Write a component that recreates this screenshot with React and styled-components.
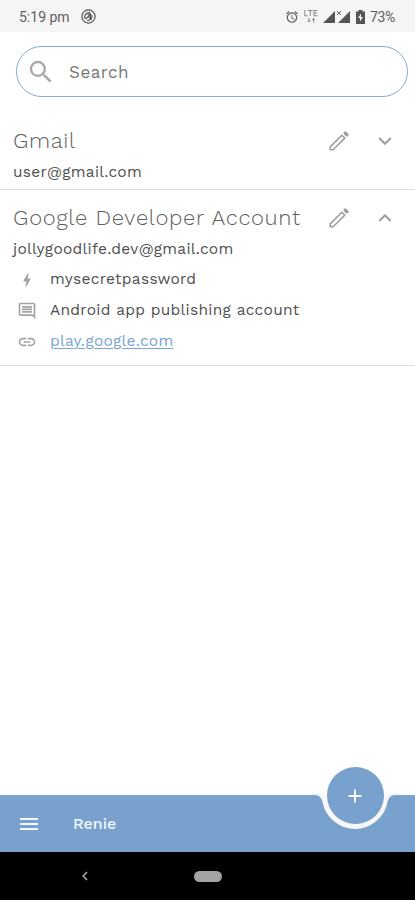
import React from 'react';
import styled, { createGlobalStyle } from 'styled-components';
import { MdSearch, MdInsertLink, MdBolt, MdOutlineComment, MdMenu, MdAdd, MdExpandMore, MdExpandLess, MdAlarm, MdChevronLeft } from 'react-icons/md';

const Global = createGlobalStyle`
  * { box-sizing: border-box; }
  body { margin: 0; background: #fff; font-family: "Work Sans", Inter, sans-serif; }
`;
const Screen = styled.div`
  width: 415px; height: 900px; display: flex; flex-direction: column;
  background: #fff; overflow: hidden;
`;
const StatusBar = styled.header`
  height: 32px; flex: none; display: flex; align-items: center; justify-content: space-between;
  padding: 1px 20px 0 19px; background: #f5f5f5; color: #606060;
  font: 400 14px/18px Roboto, sans-serif;
`;
const StatusGroup = styled.div`
  display: flex; align-items: center; gap: ${p => p.$gap}px;
  svg { display: block; flex: none; }
`;
const Label = styled.span`
  white-space: nowrap; letter-spacing: ${p => p.$track || 0}px;
`;
const SearchBox = styled.div`
  margin: 14px 7px 0 16px; height: 51px; flex: none; display: flex; align-items: center;
  gap: 13px; padding-left: 9px; border: 1px solid #84a9d3; border-radius: 26px;
  color: #777; font-size: 17px;
  svg { color: #aaa; }
`;
const Account = styled.section`
  flex: none; height: ${p => p.$height}px; padding: ${p => p.$top}px 17px 0 13px;
  border-bottom: 1px solid #dedede;
`;
const Heading = styled.div`
  display: flex; align-items: center; height: 32px;
`;
const Title = styled.h2`
  margin: 0; flex: 1; font-size: 22px; line-height: 32px; font-weight: 300; color: #606060;
`;
const Actions = styled.div`
  display: flex; align-items: center; gap: 22px; color: #a0a0a0;
  svg { display: block; }
`;
const Username = styled.div`
  height: 29px; font-size: 15.5px; line-height: 30px; color: #505050;
`;
const Detail = styled.div`
  height: 31px; display: grid; grid-template-columns: 28px 1fr; column-gap: 9px; align-items: center;
  font-size: 15.5px; line-height: 30px; color: #505050;
  svg { color: #a3a3a3; justify-self: center; margin-top: 2px; }
`;
const Link = styled.a`
  color: #7aa5d3; text-decoration: underline; text-underline-offset: 2px; text-decoration-thickness: 1px;
`;
const BottomBar = styled.footer`
  position: relative; margin-top: auto; height: 57px; flex: none; display: flex; align-items: center;
  padding-left: 17px; gap: 32px; background: #78a2cd; color: #f0f6fd; font-size: 16px; font-weight: 500;
`;
const Notch = styled.svg`
  position: absolute; left: 311px; top: -2px;
`;
const AddButton = styled.button`
  position: absolute; left: 327px; top: -28px; width: 57px; height: 57px; padding: 0 1px 0 0; border: 0;
  border-radius: 50%; display: grid; place-items: center; background: #78a2cd; color: #fff;
`;
const NavBar = styled.nav`
  height: 48px; flex: none; display: grid; grid-template-columns: 76px 118px 28px; align-items: center;
  background: #000; color: #aaa;
  svg { grid-column: 2; }
`;
const HomePill = styled.span`
  width: 28px; height: 11px; border-radius: 6px; background: #a3a3a3;
`;

const AppBadge = () => (
  <svg width="15" height="15" viewBox="0 0 15 15" fill="none" stroke="#555">
    <circle cx="7.5" cy="7.5" r="6.6" strokeWidth="1.2" />
    <path d="M4.3 9.8A4 4 0 0 1 9.5 4.2M11 6.2A4 4 0 0 1 6.2 11.2" strokeWidth="1.2" />
    <path d="M6.2 5.2h3.4v3.4M9.4 5.4L4.6 10.2M7 7l3.5 3.5" strokeWidth="1.2" />
  </svg>
);
const Lte = () => (
  <svg width="14" height="15" viewBox="0 0 14 15" fill="none" stroke="#888" strokeWidth="1">
    <path d="M.8 1v5.8h3M3.8 1.5h5M6.3 1.5v5.5M13.5 1.5H10v5.3h3.5M10 4h3" />
    <path d="M5 9v4M3.7 11.5L5 13l1.3-1.5M9.5 13.5v-4M8.2 11l1.3-1.5L10.8 11" />
  </svg>
);
const Signals = () => (
  <svg width="28" height="14" viewBox="0 0 28 14" fill="#555">
    <path d="M0 13L12 1v12zM15 13L27 1v12z" />
    <path d="M14 1l4 4M18 1l-4 4" stroke="#666" fill="none" />
  </svg>
);
const Battery = () => (
  <svg width="9" height="14" viewBox="0 0 9 14">
    <path d="M2.5 0h4v1.6H9V14H0V1.6h2.5z" fill="#555" />
    <path d="M5 3.5L2 8h2v3.5L7 7H5z" fill="#f5f5f5" />
  </svg>
);
const Pencil = () => (
  <svg width="22" height="22" viewBox="0 0 22 22" fill="none" stroke="#a0a0a0" strokeWidth="1.6" strokeLinejoin="round">
    <path d="M2.2 19.8v-2.9L13.9 5.2l2.9 2.9L5.1 19.8z" />
    <path d="M17.2 3.1l1.7 1.7" strokeWidth="3.4" strokeLinecap="round" />
  </svg>
);

function Entry({ title, user, track, userTrack, open, height, top, children }) {
  return (
    <Account $height={height} $top={top}>
      <Heading>
        <Title><Label $track={track}>{title}</Label></Title>
        <Actions><Pencil />{open ? <MdExpandLess size={26} /> : <MdExpandMore size={26} />}</Actions>
      </Heading>
      <Username><Label $track={userTrack}>{user}</Label></Username>
      {children}
    </Account>
  );
}

export default function App() {
  return (
    <Screen>
      <Global />
      <StatusBar>
        <StatusGroup $gap={11}><Label>5:19 pm</Label><AppBadge /></StatusGroup>
        <StatusGroup $gap={5}><MdAlarm size={14} /><Lte /><Signals /><Battery /><Label $track={-0.3}>73%</Label></StatusGroup>
      </StatusBar>
      <SearchBox><MdSearch size={30} /><Label $track={0.5}>Search</Label></SearchBox>
      <Entry title="Gmail" user="user@gmail.com" track={0.6} userTrack={0.28} height={93} top={28} />
      <Entry title="Google Developer Account" user="jollygoodlife.dev@gmail.com" track={0.7} userTrack={0.27} open height={176} top={12}>
        <Detail><MdBolt size={18} /><Label $track={0.3}>mysecretpassword</Label></Detail>
        <Detail><MdOutlineComment size={20} /><Label $track={0.27}>Android app publishing account</Label></Detail>
        <Detail><MdInsertLink size={20} /><Link><Label $track={0.27}>play.google.com</Label></Link></Detail>
      </Entry>
      <BottomBar>
        <MdMenu size={24} />
        <Label>Renie</Label>
        <Notch width="88" height="38" viewBox="311 793 88 38">
          <path d="M311 793v2h4q6 0 7.55 7a33 33 0 0 0 64.9 0q1.55-7 7.55-7h4v-2z" fill="#f7f7f7" />
        </Notch>
        <AddButton aria-label="Add"><MdAdd size={22} /></AddButton>
      </BottomBar>
      <NavBar><MdChevronLeft size={18} /><HomePill /></NavBar>
    </Screen>
  );
}
